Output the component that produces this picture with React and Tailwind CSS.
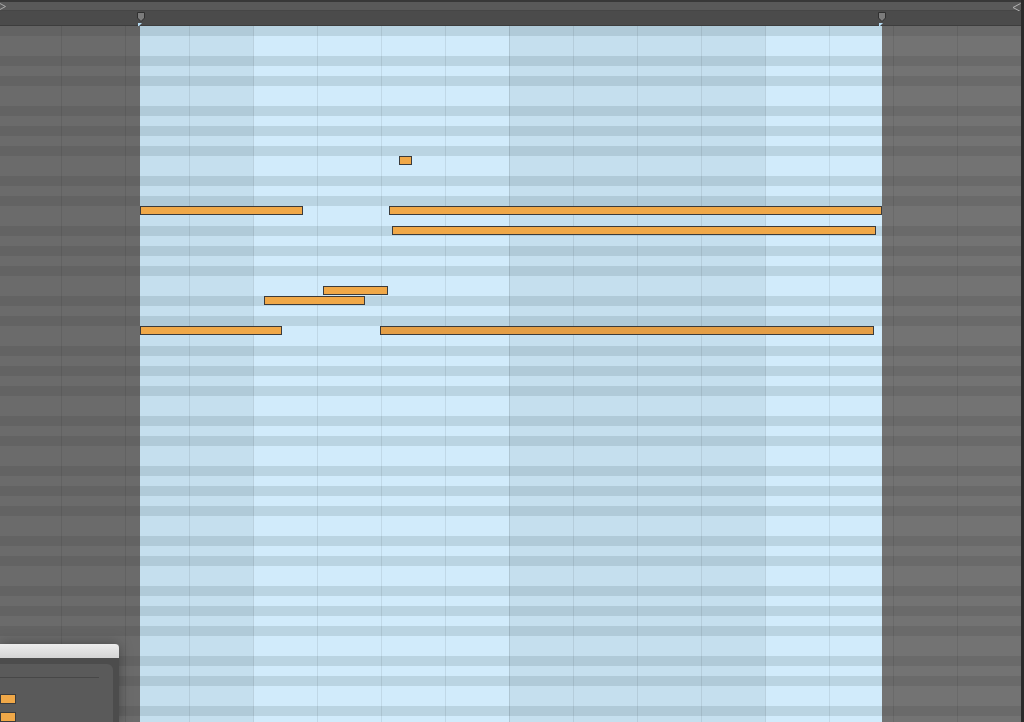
import React from "react";

const BLACK = [true, false, false, true, false, true, false, false, true, false, true, false];
const ROWS = Array.from({ length: 70 }, (_, i) => BLACK[i % 12]);
const BEATS = Array.from({ length: 15 }, (_, i) => i);

function Row({ black }) {
  return (
    <div className="flex h-[10px] w-full">
      <div className={black ? "w-[140px] bg-[#636363]" : "w-[140px] bg-[#6b6b6b]"} />
      <div className={black ? "w-[113px] bg-[#b0cad8]" : "w-[113px] bg-[#c5dfee]"} />
      <div className={black ? "w-[256px] bg-[#bad4e2]" : "w-[256px] bg-[#d1ebfb]"} />
      <div className={black ? "w-[256px] bg-[#b0cad8]" : "w-[256px] bg-[#c5dfee]"} />
      <div className={black ? "w-[117px] bg-[#bad4e2]" : "w-[117px] bg-[#d1ebfb]"} />
      <div className={black ? "flex-1 bg-[#6a6a6a]" : "flex-1 bg-[#737373]"} />
    </div>
  );
}

function Marker() {
  return (
    <div className="flex flex-col items-center w-[10px]">
      <svg width="10" height="10" viewBox="0 0 10 10">
        <path d="M1.5 0.5 H8.5 V6 L5 9.5 L1.5 6 Z" fill="#7c7c7c" stroke="#2f2f2f" strokeWidth="1" />
      </svg>
      <svg width="6" height="4" viewBox="0 0 6 4" className="mt-[1px]">
        <path d="M0 0 H4 L0 4 Z" fill="#b5dcf5" />
      </svg>
    </div>
  );
}

const noteBase = "absolute h-[9px] border border-[#3b3b3b] bg-[#f0a848]";

export default function App() {
  return (
    <div
      className="relative w-[1024px] h-[722px] overflow-hidden flex bg-[#6a6a6a]"
      style={{ fontFamily: '"Liberation Sans", Arial, sans-serif' }}
    >
      <div className="flex-1 flex flex-col min-w-0">
        <div className="h-[2px] bg-[#383838]" />
        <div className="relative h-[8px] bg-[#595959]">
          <svg className="absolute left-0 top-[1px]" width="7" height="7" viewBox="0 0 7 7">
            <path d="M0 0.5 L5.5 3.5 L0 6.5" fill="none" stroke="#a9a9a9" strokeWidth="1" />
          </svg>
          <svg className="absolute right-0 top-[1px]" width="9" height="9" viewBox="0 0 9 9">
            <path d="M8.5 0.5 L1 4.5 L8.5 8.5" fill="none" stroke="#b4b4b4" strokeWidth="1" />
          </svg>
        </div>
        <div className="h-px bg-[#464646]" />
        <div className="relative h-[14px] bg-[#4b4b4b]">
          <div className="absolute left-[136px] top-[1px]">
            <Marker />
          </div>
          <div className="absolute left-[877px] top-[1px]">
            <Marker />
          </div>
        </div>
        <div className="h-px bg-[#3d3d3d]" />
        <div className="relative flex-1 overflow-hidden">
          <div className="flex flex-col">
            {ROWS.map((b, i) => (
              <Row key={i} black={b} />
            ))}
          </div>
          <div className="absolute inset-0 flex pointer-events-none">
            <div className="w-[61px] shrink-0" />
            {BEATS.map((k) => (
              <div
                key={k}
                className={
                  k % 4 === 3
                    ? "w-[64px] shrink-0 border-l border-[rgba(0,0,0,0.11)]"
                    : "w-[64px] shrink-0 border-l border-[rgba(0,0,0,0.08)]"
                }
              />
            ))}
          </div>
          <div className={`${noteBase} left-[399px] top-[130px] w-[13px]`} />
          <div className={`${noteBase} left-[140px] top-[180px] w-[163px]`} />
          <div className={`${noteBase} left-[389px] top-[180px] w-[493px]`} />
          <div className={`${noteBase} left-[392px] top-[200px] w-[484px]`} />
          <div className={`${noteBase} left-[323px] top-[260px] w-[65px]`} />
          <div className={`${noteBase} left-[264px] top-[270px] w-[101px]`} />
          <div className={`${noteBase} left-[140px] top-[300px] w-[142px]`} />
          <div className="absolute left-[380px] top-[300px] w-[494px] h-[9px] border border-[#3b3b3b] bg-[#e49e46]" />
        </div>
      </div>
      <div className="w-[3px] bg-[#2a2a2a]" />

      <div className="absolute left-0 top-[644px] w-[119px] h-[78px] flex flex-col shadow-[0_0_12px_rgba(0,0,0,0.35)]">
        <div className="h-[19px] rounded-tr-[4px] bg-gradient-to-b from-[#ececec] to-[#d4d4d4]" />
        <div className="flex-1 bg-[#4c4c4c] pt-[6px] pr-[6px] flex flex-col">
          <div className="flex-1 bg-[#5a5a5a] rounded-tr-[6px] flex flex-col pt-[13px]">
            <div className="h-px w-[99px] bg-[#474747]" />
            <div className="mt-[16px] w-[16px] h-[10px] border border-[#3b3b3b] bg-[#f0a848]" />
            <div className="mt-[8px] w-[16px] h-[10px] border border-[#3b3b3b] bg-[#f0a848]" />
          </div>
        </div>
      </div>
    </div>
  );
}
